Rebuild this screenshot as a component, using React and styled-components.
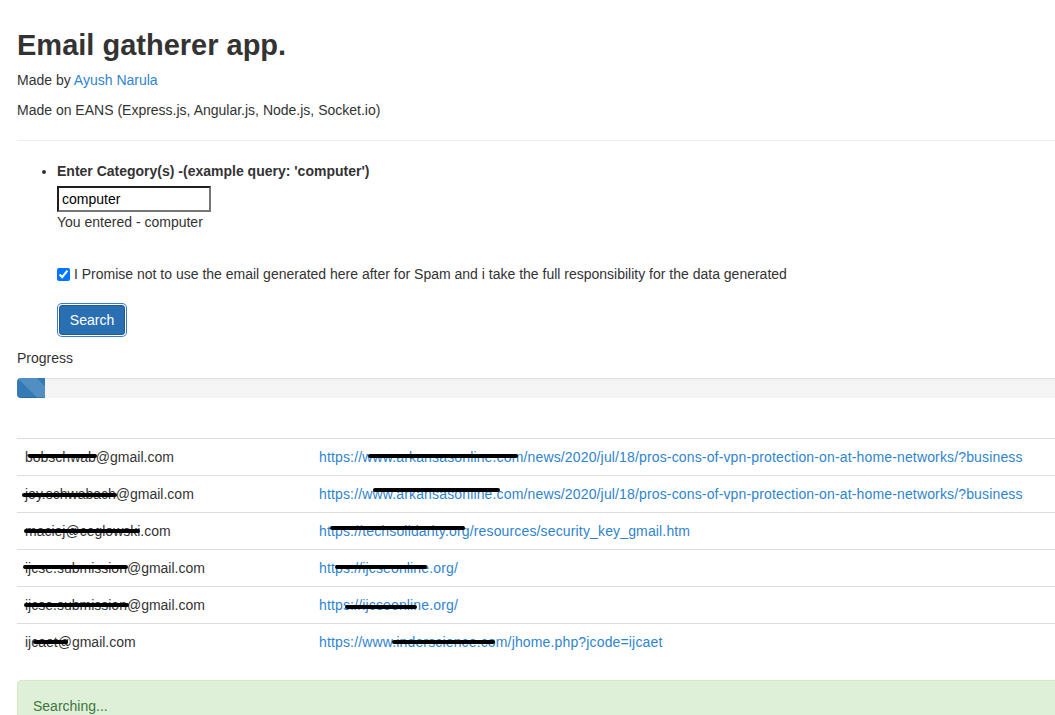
import React from 'react';
import styled, { createGlobalStyle } from 'styled-components';

const rows = [
  {
    email: 'bobschwab@gmail.com',
    url: 'https://www.arkansasonline.com/news/2020/jul/18/pros-cons-of-vpn-protection-on-at-home-networks/?business',
    bars: [[11, 15, 69], [57, 15, 150]],
  },
  {
    email: 'joy.schwabach@gmail.com',
    url: 'https://www.arkansasonline.com/news/2020/jul/18/pros-cons-of-vpn-protection-on-at-home-networks/?business',
    bars: [[5, 17, 95], [62, 12, 127]],
  },
  {
    email: 'maciej@ceglowski.com',
    url: 'https://techsolidarity.org/resources/security_key_gmail.htm',
    bars: [[7, 16, 116], [19, 13, 135]],
  },
  {
    email: 'ijcse.submission@gmail.com',
    url: 'https://ijcseonline.org/',
    bars: [[6, 15, 105], [24, 15, 92]],
  },
  {
    email: 'ijcse.submission@gmail.com',
    url: 'https://ijcseonline.org/',
    bars: [[7, 16, 105], [34, 18, 72]],
  },
  {
    email: 'ijcaet@gmail.com',
    url: 'https://www.inderscience.com/jhome.php?jcode=ijcaet',
    bars: [[16, 16, 35], [81, 16, 103]],
  },
];

export default function App() {
  return (
    <>
      <GlobalStyle />
      <Page>
        <Title>Email gatherer app.</Title>
        <Para>Made by <Link href="#">Ayush Narula</Link></Para>
        <Para>Made on EANS (Express.js, Angular.js, Node.js, Socket.io)</Para>
        <Rule />
        <FormList>
          <li>
            <FieldLabel>Enter Category(s) -(example query: 'computer')</FieldLabel>
            <QueryInput type="text" defaultValue="computer" />
            <Echo>You entered - computer</Echo>
            <PromiseLine>
              <input type="checkbox" defaultChecked />
              I Promise not to use the email generated here after for Spam and i take the full responsibility for the data generated
            </PromiseLine>
            <SearchButton type="button">Search</SearchButton>
          </li>
        </FormList>
        <ProgressLabel>Progress</ProgressLabel>
        <ProgressTrack>
          <ProgressFill style={{ width: '28px' }} />
        </ProgressTrack>
        <ResultTable>
          <tbody>
            {rows.map((row, i) => (
              <tr key={i}>
                <EmailCell>
                  {row.email}
                  <Redact $left={row.bars[0][0]} $top={row.bars[0][1]} $width={row.bars[0][2]} />
                </EmailCell>
                <UrlCell>
                  <Link href="#">{row.url}</Link>
                  <Redact $left={row.bars[1][0]} $top={row.bars[1][1]} $width={row.bars[1][2]} />
                </UrlCell>
              </tr>
            ))}
          </tbody>
        </ResultTable>
        <SuccessAlert>Searching...</SuccessAlert>
      </Page>
    </>
  );
}

const GlobalStyle = createGlobalStyle`
  html, body {
    margin: 0;
    overflow: hidden;
    background: #fff;
  }
  body {
    font-family: "Liberation Sans", Arial, sans-serif;
    font-size: 14px;
    line-height: 20px;
    color: #333;
  }
`
const Page = styled.div`
  width: 1160px;
  padding-left: 17px;
`
const Title = styled.h1`
  margin: 29px 0 8px;
  font-size: 29px;
  line-height: 33px;
  font-weight: 700;
  color: #333;
`
const Para = styled.p`
  margin: 0 0 10px;
`
const Link = styled.a`
  color: #2f84cf;
  text-decoration: none;
`
const Rule = styled.hr`
  margin: 20px 0;
  border: 0;
  border-top: 1px solid #eee;
`
const FormList = styled.ul`
  margin: 0;
  padding-left: 40px;
`
const FieldLabel = styled.label`
  display: block;
  margin-bottom: 5px;
  font-weight: 700;
`
const QueryInput = styled.input`
  display: block;
  box-sizing: border-box;
  width: 154px;
  height: 26px;
  margin: 0;
  padding: 1px 3px;
  border-width: 2px;
  border-style: solid;
  border-color: #1e1e1e #767676 #767676 #1e1e1e;
  font-family: "Liberation Sans", Arial, sans-serif;
  font-size: 14px;
  color: #000;
  outline: none;
`
const Echo = styled.div`
  margin-bottom: 32px;
`
const PromiseLine = styled.label`
  display: flex;
  align-items: center;
  gap: 4px;
  margin-bottom: 21px;

  input {
    width: 13px;
    height: 13px;
    margin: 0;
  }
`
const SearchButton = styled.button`
  display: block;
  width: 66px;
  height: 30px;
  margin: 2px 0 0 2px;
  padding: 0;
  border: 1px solid #1d5a99;
  border-radius: 3px;
  background: #2b6fb3;
  color: #fff;
  font-family: "Liberation Sans", Arial, sans-serif;
  font-size: 14px;
  box-shadow: 0 0 0 1px #fff, 0 0 0 2px #3a7bd0;
`
const ProgressLabel = styled.div`
  margin-top: 13px;
`
const ProgressTrack = styled.div`
  height: 20px;
  margin: 10px 0 40px;
  border-radius: 4px;
  background: #f5f5f5;
  box-shadow: inset 0 1px 2px rgba(0, 0, 0, 0.1);
  overflow: hidden;
`
const ProgressFill = styled.div`
  height: 100%;
  background-color: #337ab7;
  background-image: linear-gradient(45deg, rgba(255, 255, 255, 0.15) 25%, transparent 25%, transparent 50%, rgba(255, 255, 255, 0.15) 50%, rgba(255, 255, 255, 0.15) 75%, transparent 75%, transparent);
  background-size: 40px 40px;
  box-shadow: inset 0 -1px 0 rgba(0, 0, 0, 0.15);
`
const ResultTable = styled.table`
  width: 100%;
  margin-bottom: 20px;
  border-collapse: collapse;
  border-spacing: 0;
`
const EmailCell = styled.td`
  position: relative;
  width: 278px;
  padding: 8px;
  border-top: 1px solid #ddd;
  vertical-align: top;
`
const UrlCell = styled(EmailCell)`
  width: auto;
  white-space: nowrap;
  letter-spacing: 0.15px;
`
const Redact = styled.span`
  position: absolute;
  left: ${p => p.$left}px;
  top: ${p => p.$top}px;
  width: ${p => p.$width}px;
  height: 4px;
  border-radius: 2px;
  background: #000;
`
const SuccessAlert = styled.div`
  padding: 15px;
  border: 1px solid #d6e9c6;
  border-radius: 4px;
  background: #dff0d8;
  color: #3c763d;
`
